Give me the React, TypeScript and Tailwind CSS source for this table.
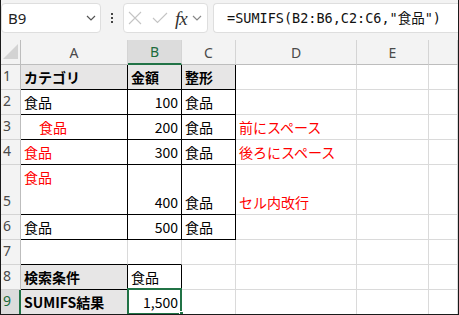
import React from 'react';

const cellFont = { fontFamily: '"Noto Sans CJK JP", "Noto Sans", sans-serif' };

type CellProps = {
  children?: React.ReactNode;
  className?: string;
};

// plain worksheet cell, bottom-aligned like Excel's default
const Cell: React.FC<CellProps> = ({ children, className = '' }) => (
  <div
    className={`relative flex items-end pb-[2px] px-[3px] border-r border-b text-[14px] leading-[20px] whitespace-pre ${className}`}
  >
    {children}
  </div>
);

const RowHead: React.FC<{ n: number; selected?: boolean; last?: boolean }> = ({ n, selected, last }) => (
  <div
    className={`flex items-end pb-[3px] pl-[2px] text-[14px] leading-[20px] font-['Noto_Sans'] ${
      last ? '' : 'border-b border-b-[#d4d4d4]'
    } ${
      selected
        ? 'bg-[#dcdcdc] text-[#1c6b3d] border-r-2 border-r-[#217346]'
        : 'bg-[#f3f3f3] text-[#4a4a4a] border-r border-r-[#bdbdbd]'
    }`}
  >
    {n}
  </div>
);

const ColHead: React.FC<{ label?: string; selected?: boolean }> = ({ label, selected }) => (
  <div
    className={`flex items-center justify-center text-[14px] font-['Noto_Sans'] border-r border-r-[#d4d4d4] ${
      selected
        ? 'bg-[#dcdcdc] text-[#1c6b3d] border-b-2 border-b-[#217346]'
        : 'bg-[#f3f3f3] text-[#4a4a4a] border-b border-b-[#bdbdbd]'
    }`}
  >
    {label}
  </div>
);

const Chevron: React.FC<{ className?: string }> = ({ className = '' }) => (
  <svg width="10" height="6" viewBox="0 0 10 6" className={className}>
    <path d="M1 1 L5 5 L9 1" fill="none" stroke="currentColor" strokeWidth="1.2" />
  </svg>
);

const grid = 'border-[#dadada]';
const black = 'border-black';
const red = 'text-[#ff0000]';
const fill = 'bg-[#e7e6e6] font-bold';

export default function App() {
  return (
    <div className="w-[459px] h-[315px] overflow-hidden bg-white border-x border-b border-[#1a1a1a] flex flex-col">
      {/* name box + formula bar */}
      <div className="h-[40px] shrink-0 bg-[#f3f3f3] flex items-start pt-[3px]">
        <div className="w-[100px] h-[30px] bg-white border border-[#dedede] rounded-[4px] flex items-center pl-[6px] pr-[4px] justify-between">
          <span className="text-[15px] text-[#222] font-['Noto_Sans']">B9</span>
          <Chevron className="text-[#555]" />
        </div>
        <div className="ml-[10px] mt-[10px] flex flex-col gap-[2px]">
          <span className="w-[2px] h-[2px] bg-[#444]" />
          <span className="w-[2px] h-[2px] bg-[#444]" />
          <span className="w-[2px] h-[2px] bg-[#444]" />
        </div>
        <div className="ml-[10px] w-[85px] h-[30px] bg-white border border-[#dedede] rounded-[4px] flex items-center pl-[4px]">
          <svg width="14" height="14" viewBox="0 0 14 14">
            <path d="M1 1 L13 13 M13 1 L1 13" stroke="#c4c4c4" strokeWidth="1.1" fill="none" />
          </svg>
          <svg width="16" height="12" viewBox="0 0 16 12" className="ml-[10px]">
            <path d="M1 6 L5.5 10.5 L15 1" stroke="#c4c4c4" strokeWidth="1.1" fill="none" />
          </svg>
          <span className="ml-[7px] text-[19px] italic leading-none text-[#333] font-['Liberation_Serif'] tracking-[-1px]">fx</span>
          <Chevron className="ml-[5px] text-[#888]" />
        </div>
        <div className="ml-[5px] flex-1 h-[30px] bg-white border border-r-0 border-[#dedede] rounded-l-[4px] flex items-center pl-[13px]">
          <span
            className="text-[13.5px] text-[#111] whitespace-nowrap"
            style={{ fontFamily: '"DejaVu Sans Mono", "Noto Sans CJK JP", monospace' }}
          >
            =SUMIFS(B2:B6,C2:C6,"食品")
          </span>
        </div>
      </div>

      {/* sheet */}
      <div
        className="grid grid-cols-[20px_107px_54px_54px_121px_72px_29px] grid-rows-[25px_25px_25px_25px_25px_50px_25px_25px_25px_24px] text-black"
        style={cellFont}
      >
        <div className="bg-[#f3f3f3] border-r border-r-[#bdbdbd] border-b border-b-[#bdbdbd] flex items-end justify-end pr-[2px] pb-[5px]">
          <svg width="15" height="15" viewBox="0 0 15 15">
            <path d="M15 0 L15 15 L0 15 Z" fill="#d3d3d3" />
          </svg>
        </div>
        <ColHead label="A" />
        <ColHead label="B" selected />
        <ColHead label="C" />
        <ColHead label="D" />
        <ColHead label="E" />
        <ColHead />

        {/* 1 */}
        <RowHead n={1} />
        <Cell className={`${black} ${fill}`}>カテゴリ</Cell>
        <Cell className={`${black} ${fill}`}>金額</Cell>
        <Cell className={`${black} ${fill}`}>整形</Cell>
        <Cell className={grid} />
        <Cell className={grid} />
        <Cell className={grid} />

        {/* 2 */}
        <RowHead n={2} />
        <Cell className={black}>食品</Cell>
        <Cell className={`${black} justify-end`}>100</Cell>
        <Cell className={black}>食品</Cell>
        <Cell className={grid} />
        <Cell className={grid} />
        <Cell className={grid} />

        {/* 3 */}
        <RowHead n={3} />
        <Cell className={`${black} ${red} pl-[18px]`}>食品</Cell>
        <Cell className={`${black} justify-end`}>200</Cell>
        <Cell className={black}>食品</Cell>
        <Cell className={`${grid} ${red}`}>前にスペース</Cell>
        <Cell className={grid} />
        <Cell className={grid} />

        {/* 4 */}
        <RowHead n={4} />
        <Cell className={`${black} ${red}`}>食品</Cell>
        <Cell className={`${black} justify-end`}>300</Cell>
        <Cell className={black}>食品</Cell>
        <Cell className={`${grid} ${red}`}>後ろにスペース</Cell>
        <Cell className={grid} />
        <Cell className={grid} />

        {/* 5 : wrapped cell with a line break */}
        <RowHead n={5} />
        <Cell className={`${black} ${red} flex-col !items-start justify-end pb-[4px] leading-[22px]`}>
          <span>食品</span>
          <span> </span>
        </Cell>
        <Cell className={`${black} justify-end`}>400</Cell>
        <Cell className={black}>食品</Cell>
        <Cell className={`${grid} ${red}`}>セル内改行</Cell>
        <Cell className={grid} />
        <Cell className={grid} />

        {/* 6 */}
        <RowHead n={6} />
        <Cell className={black}>食品</Cell>
        <Cell className={`${black} justify-end`}>500</Cell>
        <Cell className={black}>食品</Cell>
        <Cell className={grid} />
        <Cell className={grid} />
        <Cell className={grid} />

        {/* 7 */}
        <RowHead n={7} />
        <Cell className="border-r-[#dadada] border-b-black" />
        <Cell className="border-r-[#dadada] border-b-black" />
        <Cell className={grid} />
        <Cell className={grid} />
        <Cell className={grid} />
        <Cell className={grid} />

        {/* 8 */}
        <RowHead n={8} />
        <Cell className={`${black} ${fill}`}>検索条件</Cell>
        <Cell className={black}>食品</Cell>
        <Cell className={grid} />
        <Cell className={grid} />
        <Cell className={grid} />
        <Cell className={grid} />

        {/* 9 */}
        <RowHead n={9} selected last />
        <Cell className={`${fill} border-b-0 border-r-black`}>SUMIFS結果</Cell>
        <Cell className="border-b-0 border-r-black justify-end">
          1,500
          <div className="absolute -left-[1px] -top-[2px] -right-[1px] -bottom-[1px] border-2 border-[#217346]" />
          <div className="absolute -right-[3px] -bottom-[2px] w-[5px] h-[5px] bg-[#217346] border border-white" />
        </Cell>
        <Cell className={`${grid} border-b-0`} />
        <Cell className={`${grid} border-b-0`} />
        <Cell className={`${grid} border-b-0`} />
        <Cell className={`${grid} border-b-0`} />
      </div>
    </div>
  );
}
